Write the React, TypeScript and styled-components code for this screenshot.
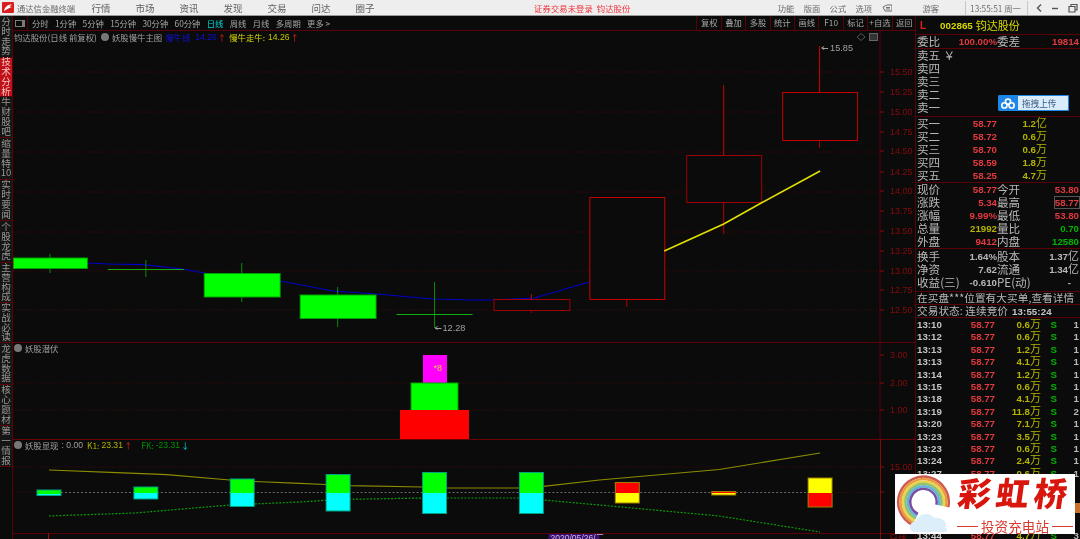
import React from "react";
import styled, { createGlobalStyle } from "styled-components";

const CJK = `"Noto Sans CJK SC", "Noto Sans", sans-serif`;
const NUM = `"Liberation Sans", "Noto Sans CJK SC", sans-serif`;

const RED = "#e23a3f";
const OLIVE = "#b4b400";
const GREEN = "#00b400";
const GRAY = "#b8b8b8";
const LINE = "#5a0008";
const AXIS = "#860c0c";
const BG = "#0b0b0b";

const GlobalStyle = createGlobalStyle`
  html, body { margin: 0; padding: 0; background: ${BG}; overflow: hidden; }
  #root { width: 1080px; height: 539px; }
`;

const Page = styled.div`
  position: relative;
  width: 1080px;
  height: 539px;
  display: flex;
  flex-direction: column;
  background: ${BG};
  overflow: hidden;
  font-family: ${CJK};
  filter: blur(0.3px);
`;

/* ---------- title bar ---------- */

const TitleBar = styled.header`
  height: 15px;
  flex: none;
  display: flex;
  align-items: center;
  background: #eeeeee;
  border-bottom: 1px solid #9a9a9a;
  color: #6a6a6a;
  font-size: 8.3px;
  white-space: nowrap;
`;

const Logo = styled.svg`
  width: 12px;
  height: 11px;
  margin: 0 3px 0 2px;
  flex: none;
`;

const AppName = styled.span`
  width: 62px;
`;

const MainMenu = styled.nav`
  display: flex;
  width: 456px;
`;

const MainMenuItem = styled.span`
  width: 44px;
  text-align: center;
  font-size: 9.5px;
  color: #606060;
`;

const LoginNotice = styled.span`
  width: 244px;
  color: #f0303a;
  letter-spacing: 0.1px;
`;

const SmallMenu = styled.span`
  width: 26px;
  font-size: 8.3px;
`;

const GuestName = styled.span`
  margin: 0 26px 0 30px;
`;

const ClockBox = styled.span`
  width: 57px;
  padding-left: 4px;
  height: 14px;
  line-height: 14px;
  border-left: 1px solid #c8c8c8;
  border-right: 1px solid #c8c8c8;
  font-size: 8.3px;
  color: #707070;
`;

const WindowIcons = styled.svg`
  width: 52px;
  height: 14px;
  flex: none;
`;

/* ---------- body ---------- */

const Body = styled.div`
  flex: 1;
  min-height: 0;
  display: flex;
`;

const SideRail = styled.aside`
  width: 12px;
  flex: none;
  display: flex;
  flex-direction: column;
  border-right: 1px solid ${LINE};
`;

const RailTab = styled.div<{ $active?: boolean; $h: number }>`
  height: ${(p) => p.$h}px;
  flex: none;
  box-sizing: border-box;
  display: flex;
  flex-direction: column;
  align-items: center;
  justify-content: center;
  border-bottom: 1px solid ${LINE};
  background: ${(p) => (p.$active ? "#c01018" : "#151515")};
  color: ${(p) => (p.$active ? "#f0c8c8" : "#989898")};
  font-size: 9.6px;
  line-height: 9.8px;
`;

const ChartColumn = styled.main`
  flex: 1;
  min-width: 0;
  display: flex;
  flex-direction: column;
`;

const Toolbar = styled.div`
  height: 14px;
  flex: none;
  display: flex;
  align-items: center;
  border-bottom: 1px solid ${LINE};
  color: #a6a6a6;
  font-size: 8.3px;
  white-space: nowrap;
`;

const PanelToggle = styled.span`
  width: 15px;
  height: 14px;
  flex: none;
  box-sizing: border-box;
  display: flex;
  align-items: center;
  justify-content: center;
  border-right: 1px solid ${LINE};
  &::before {
    content: "";
    width: 6px;
    height: 5px;
    border: 1px solid #7a7a7a;
    border-right-width: 3px;
  }
`;

const PeriodList = styled.div`
  flex: 1;
  display: flex;
  gap: 6.4px;
  padding-left: 4px;
`;

const Period = styled.span<{ $active?: boolean }>`
  color: ${(p) => (p.$active ? "#00d8d8" : "#a6a6a6")};
`;

const ToolButton = styled.span`
  width: 24.4px;
  height: 14px;
  line-height: 13px;
  flex: none;
  text-align: center;
  border-left: 1px solid ${LINE};
  box-sizing: border-box;
`;

const Pane = styled.section<{ $h: number }>`
  position: relative;
  height: ${(p) => p.$h}px;
  flex: none;
`;

const PaneSvg = styled.svg`
  display: block;
  width: 100%;
  height: 100%;
`;

const Legend = styled.div`
  position: absolute;
  left: 1px;
  top: 0;
  height: 12px;
  display: flex;
  align-items: center;
  font-size: 8.4px;
  color: #a0a0a0;
  white-space: nowrap;
`;

const LegendDot = styled.span<{ $gap?: number }>`
  width: 8px;
  height: 8px;
  border-radius: 50%;
  background: #777;
  margin: 0 3px 0 ${(p) => p.$gap || 0}px;
  flex: none;
`;

const LegendText = styled.span<{ $color?: string; $gap?: number }>`
  color: ${(p) => p.$color || "#a0a0a0"};
  margin-left: ${(p) => p.$gap || 0}px;
`;

const LegendNum = styled(LegendText)`
  font-family: ${NUM};
  font-size: 8.6px;
`;

const AxisText = styled.text`
  font-family: ${NUM};
  font-size: 9px;
  fill: ${AXIS};
`;

const PriceTag = styled.text`
  font-family: ${NUM};
  font-size: 9.2px;
  fill: #a0a0a0;
`;

const DateText = styled.text`
  font-family: ${NUM};
  font-size: 8.6px;
  fill: #c8b8e0;
`;

/* ---------- quote panel ---------- */

const QuotePanel = styled.aside`
  width: 164px;
  flex: none;
  border-left: 1px solid ${LINE};
  margin-left: -1px;
  color: ${GRAY};
  font-size: 11.6px;
  overflow: hidden;
`;

const StockHeader = styled.div`
  height: 19px;
  box-sizing: border-box;
  display: flex;
  align-items: center;
  padding-left: 4px;
  border-bottom: 1px solid ${LINE};
  color: #d8d800;
  font-size: 11px;
`;

const MarketFlag = styled.span`
  color: #e02020;
  font-family: ${NUM};
  font-size: 10px;
  font-weight: 700;
  margin-right: 14px;
`;

const StockCode = styled.span`
  font-family: ${NUM};
  font-weight: 700;
  font-size: 9.8px;
  margin-right: 3px;
`;

const Section = styled.div<{ $top?: number; $bottom?: number }>`
  padding: ${(p) => p.$top || 0}px 0 ${(p) => p.$bottom || 0}px 1px;
  border-bottom: 1px solid ${LINE};
`;

const Row = styled.div<{ $cols: string; $h?: number }>`
  display: grid;
  grid-template-columns: ${(p) => p.$cols};
  height: ${(p) => p.$h || 13}px;
  line-height: ${(p) => p.$h || 13}px;
  white-space: nowrap;
`;

const Value = styled.span<{ $color?: string; $boxed?: boolean }>`
  justify-self: end;
  font-family: ${NUM};
  font-weight: 700;
  font-size: 9.7px;
  color: ${(p) => p.$color || GRAY};
  ${(p) =>
    p.$boxed
      ? `outline: 1px solid #555; outline-offset: 0; height: 11px; line-height: 11px; margin-top: 1px;`
      : ""}
`;

const Unit = styled.span`
  font-family: ${CJK};
  font-weight: 400;
  font-size: 11px;
  line-height: 0;
`;

const TickTime = styled.span`
  font-family: ${NUM};
  font-weight: 700;
  font-size: 9.7px;
  color: #c4c4c4;
`;

const NoteRow = styled.div`
  height: 12px;
  line-height: 12px;
  font-size: 10.6px;
  white-space: nowrap;
  letter-spacing: 0.1px;
`;

const NoteTime = styled.span`
  font-family: ${NUM};
  font-weight: 700;
  font-size: 9.7px;
  margin-left: 4px;
  color: #c4c4c4;
`;

const TickList = styled.div`
  padding: 1px 0 0 1px;
`;

/* ---------- overlays ---------- */

const UploadBadge = styled.div`
  position: absolute;
  left: 998px;
  top: 95px;
  width: 71px;
  height: 16px;
  display: flex;
  align-items: center;
  border-radius: 2px;
  background: linear-gradient(90deg, #1e86e8 0 20px, #d8ecfb 20px);
  box-shadow: inset 0 0 0 1px #1e86e8;
  color: #3a5a80;
  font-size: 8.6px;
`;

const UploadIcon = styled.svg`
  width: 14px;
  height: 11px;
  margin: 0 7px 0 3px;
  flex: none;
`;

const Watermark = styled.div`
  position: absolute;
  left: 895px;
  top: 474px;
  width: 180px;
  height: 60px;
  display: flex;
  background: #fff;
  &::after {
    content: "";
    position: absolute;
    right: -5px;
    top: 29px;
    width: 5px;
    height: 10px;
    background: #c8702a;
  }
`;

const RainbowSvg = styled.svg`
  width: 60px;
  height: 60px;
  flex: none;
`;

const BrandBlock = styled.div`
  flex: 1;
  display: flex;
  flex-direction: column;
  align-items: center;
`;

const BrandName = styled.div`
  height: 44px;
  line-height: 36px;
  font-size: 33px;
  font-weight: 900;
  letter-spacing: 5px;
  color: #d8160e;
  transform: skewX(-8deg);
  white-space: nowrap;
`;

const BrandSlogan = styled.div`
  display: flex;
  align-items: center;
  gap: 3px;
  font-size: 13.6px;
  line-height: 16px;
  color: #d83a30;
  white-space: nowrap;
  &::before,
  &::after {
    content: "";
    width: 21px;
    height: 1px;
    background: #d83a30;
  }
`;

/* ---------- data ---------- */

const railTabs: { label: string[]; h: number; active?: boolean }[] = [
  { label: ["分", "时", "走", "势"], h: 42 },
  { label: ["技", "术", "分", "析"], h: 39, active: true },
  { label: ["牛", "财", "股", "吧"], h: 41 },
  { label: ["缩", "量", "特", "10"], h: 42 },
  { label: ["实", "时", "要", "闻"], h: 41 },
  { label: ["个", "股", "龙", "虎"], h: 42 },
  { label: ["主", "营", "构", "成"], h: 40 },
  { label: ["实", "战", "必", "读"], h: 40 },
  { label: ["龙", "虎", "数", "据"], h: 42 },
  { label: ["核", "心", "题", "材"], h: 41 },
  { label: ["第", "一", "情", "报"], h: 41 },
];

const periods = ["分时", "1分钟", "5分钟", "15分钟", "30分钟", "60分钟", "日线", "周线", "月线", "多周期", "更多 >"];
const toolButtons = ["复权", "叠加", "多股", "统计", "画线", "F10", "标记", "+自选", "返回"];

type CandleData = { x: number; w: number; top: number; bottom: number; high: number; low: number; up?: boolean; bright?: boolean };

const candles: CandleData[] = [
  { x: 13, w: 74, top: 258, bottom: 268.5, high: 254, low: 273 },
  { x: 108, w: 76, top: 269.5, bottom: 269.5, high: 260, low: 277 },
  { x: 204, w: 76, top: 273.5, bottom: 297, high: 263, low: 302 },
  { x: 300, w: 76, top: 295, bottom: 318.5, high: 287, low: 327 },
  { x: 397, w: 76, top: 314.5, bottom: 314.5, high: 282, low: 328 },
  { x: 494, w: 76, top: 299.5, bottom: 310.5, high: 294, low: 313, up: true },
  { x: 590, w: 75, top: 197.5, bottom: 299.5, high: 197.5, low: 307, up: true, bright: true },
  { x: 687, w: 75, top: 155.5, bottom: 202.5, high: 85, low: 234, up: true },
  { x: 783, w: 75, top: 92.5, bottom: 140.5, high: 46, low: 148, up: true, bright: true },
];

const priceTicks: [string, number][] = [
  ["15.50", 72], ["15.25", 92], ["15.00", 112], ["14.75", 132], ["14.50", 151], ["14.25", 172], ["14.00", 191],
  ["13.75", 211], ["13.50", 231], ["13.25", 251], ["13.00", 271], ["12.75", 290], ["12.50", 310],
];
const mainGrid = [72, 112, 152, 192, 232, 271, 310];

type BarData = { x: number; top: number; mid: number; bottom: number; upper: string; lower: string; edge: string };
const signalBars: BarData[] = [
  { x: 37, top: 490, mid: 494, bottom: 495.5, upper: "#00ff00", lower: "#00ffff", edge: "#00a080" },
  { x: 134, top: 487, mid: 493, bottom: 499, upper: "#00ff00", lower: "#00ffff", edge: "#00a080" },
  { x: 230.5, top: 479, mid: 493, bottom: 506.5, upper: "#00ff00", lower: "#00ffff", edge: "#00a080" },
  { x: 326.5, top: 474.5, mid: 493, bottom: 511, upper: "#00ff00", lower: "#00ffff", edge: "#00a080" },
  { x: 423, top: 472.5, mid: 493, bottom: 513.5, upper: "#00ff00", lower: "#00ffff", edge: "#00a080" },
  { x: 520, top: 472.5, mid: 493, bottom: 513.5, upper: "#00ff00", lower: "#00ffff", edge: "#00a080" },
  { x: 616, top: 482.5, mid: 493, bottom: 503, upper: "#ff0000", lower: "#ffff00", edge: "#a08000" },
  { x: 712.5, top: 491.5, mid: 493, bottom: 495, upper: "#ff0000", lower: "#ffff00", edge: "#a08000" },
  { x: 809, top: 478, mid: 493, bottom: 507, upper: "#ffff00", lower: "#ff0000", edge: "#a08000" },
];

const ticks: [string, string, number][] = [
  ["13:10", "0.6", 1], ["13:12", "0.6", 1], ["13:13", "1.2", 1], ["13:13", "4.1", 1], ["13:14", "1.2", 1], ["13:15", "0.6", 1],
  ["13:18", "4.1", 1], ["13:19", "11.8", 2], ["13:20", "7.1", 1], ["13:23", "3.5", 1], ["13:23", "0.6", 1], ["13:24", "2.4", 1],
  ["13:27", "0.6", 1], ["", "", 0], ["", "", 0], ["", "", 0], ["", "", 0], ["13:44", "4.7", 3],
];

const buyRows: [string, string, string, string][] = [
  ["买一", "58.77", "1.2", "亿"],
  ["买二", "58.72", "0.6", "万"],
  ["买三", "58.70", "0.6", "万"],
  ["买四", "58.59", "1.8", "万"],
  ["买五", "58.25", "4.7", "万"],
];

const statCols = "24px 56px 25px 57px";
const stats: [string, string, string, string, string, string, boolean?][] = [
  ["现价", "58.77", RED, "今开", "53.80", RED],
  ["涨跌", "5.34", RED, "最高", "58.77", RED, true],
  ["涨幅", "9.99%", RED, "最低", "53.80", RED],
  ["总量", "21992", OLIVE, "量比", "0.70", GREEN],
  ["外盘", "9412", RED, "内盘", "12580", GREEN],
];

/* ---------- drawing helpers ---------- */

const Candle: React.FC<{ c: CandleData }> = ({ c }) => {
  const mid = c.x + c.w / 2;
  const red = c.bright ? "#c80000" : "#a00000";
  if (c.up) {
    return (
      <g shapeRendering="crispEdges">
        <line x1={mid} x2={mid} y1={c.high} y2={c.top} stroke="#d00000" />
        <line x1={mid} x2={mid} y1={c.bottom} y2={c.low} stroke="#b80000" />
        <rect x={c.x + 0.5} y={c.top} width={c.w} height={c.bottom - c.top} fill={BG} stroke={red} />
      </g>
    );
  }
  return (
    <g shapeRendering="crispEdges">
      <line x1={mid} x2={mid} y1={c.high} y2={c.low} stroke="#0a8a0a" />
      {c.top === c.bottom ? (
        <line x1={c.x} x2={c.x + c.w} y1={c.top} y2={c.top} stroke="#10b010" />
      ) : (
        <rect x={c.x + 0.5} y={c.top} width={c.w} height={c.bottom - c.top} fill="#00ff00" stroke="#00a000" />
      )}
    </g>
  );
};

const GridLine: React.FC<{ y: number; x2?: number }> = ({ y, x2 = 881 }) => (
  <line x1={13} x2={x2} y1={y} y2={y} stroke="#4a0a0a" strokeDasharray="1 2" shapeRendering="crispEdges" />
);

const AxisTick: React.FC<{ y: number; label: string }> = ({ y, label }) => (
  <g>
    <line x1={881} x2={885} y1={y} y2={y} stroke={AXIS} shapeRendering="crispEdges" />
    <AxisText x={891} y={y + 3}>{label}</AxisText>
  </g>
);

const toPoints = (pts: number[][]) => pts.map((p) => p.join(",")).join(" ");

const polar = (cx: number, cy: number, r: number, deg: number) => {
  const a = (deg * Math.PI) / 180;
  return `${(cx + r * Math.cos(a)).toFixed(1)} ${(cy + r * Math.sin(a)).toFixed(1)}`;
};

const rainbowBands: [string, number][] = [
  ["#cf5a52", 25.3],
  ["#e79a3f", 22.9],
  ["#ecd24e", 20.5],
  ["#8fc26b", 18.1],
  ["#5fb4d8", 15.7],
  ["#7a4fa3", 13.2],
];

const blueLine = [[87, 263], [110, 264], [143, 264.6], [183, 269], [204, 273], [281, 281], [333, 291], [377, 294], [433, 299], [473, 300], [494, 300], [535, 298], [590, 282]];
const yellowLine = [[665, 251], [724.5, 224], [762, 203], [821, 171]];
const signalYellow = [[49, 470], [117, 472.6], [167, 474.7], [230, 480], [255, 481.5], [300, 483.3], [326, 484.5], [350, 485.6], [423, 487], [447, 488], [520, 488], [544, 486.3], [600, 480], [720, 469.5], [821, 453]];
const signalGreen = [[49, 516], [135, 513], [230, 505], [300, 502], [326, 500.3], [350, 499.3], [423, 498], [520, 498], [544, 500], [600, 505], [720, 516], [821, 532]];

export default function App() {
  return (
    <Page>
      <GlobalStyle />
      <TitleBar>
        <Logo viewBox="0 0 12 11">
          <rect width="12" height="11" rx="1" fill="#d81e1e" />
          <path d="M2 9 C3 5 5 3 10 2 L7.5 4.6 L10 5 C7 6 5 7 2 9 Z" fill="#fff" />
        </Logo>
        <AppName>通达信金融终端</AppName>
        <MainMenu>
          {["行情", "市场", "资讯", "发现", "交易", "问达", "圈子"].map((m) => (
            <MainMenuItem key={m}>{m}</MainMenuItem>
          ))}
        </MainMenu>
        <LoginNotice>证券交易未登录&nbsp;&nbsp;钧达股份</LoginNotice>
        {["功能", "版面", "公式", "选项"].map((m) => (
          <SmallMenu key={m}>{m}</SmallMenu>
        ))}
        <svg width="11" height="8" viewBox="0 0 11 8">
          <path d="M1 3 L5 1 H10 V7 H3 L1 3 Z M4 3.5 H8 M4 5 H8" fill="none" stroke="#707070" />
        </svg>
        <GuestName>游客</GuestName>
        <ClockBox>13:55:51 周一</ClockBox>
        <WindowIcons viewBox="0 0 52 14">
          <path d="M13 3.5 L9.5 7 L13 10.5" fill="none" stroke="#555" strokeWidth="1.4" />
          <path d="M24 7.5 H30" stroke="#555" strokeWidth="1.4" />
          <path d="M41 5.5 H47 V11 H41 Z M43 5.5 V3.5 H49 V9 H47" fill="none" stroke="#555" strokeWidth="1.2" />
        </WindowIcons>
      </TitleBar>

      <Body>
        <SideRail>
          {railTabs.map((t) => (
            <RailTab key={t.label.join("")} $h={t.h} $active={t.active}>
              {t.label.map((ch) => (
                <span key={ch}>{ch}</span>
              ))}
            </RailTab>
          ))}
        </SideRail>

        <ChartColumn>
          <Toolbar>
            <PanelToggle />
            <PeriodList>
              {periods.map((p) => (
                <Period key={p} $active={p === "日线"}>{p}</Period>
              ))}
            </PeriodList>
            {toolButtons.map((b) => (
              <ToolButton key={b}>{b}</ToolButton>
            ))}
          </Toolbar>

          <Pane $h={311}>
            <PaneSvg viewBox="13 31 904 311" preserveAspectRatio="none">
              {mainGrid.map((y) => (
                <GridLine key={y} y={y} />
              ))}
              <polyline points={toPoints(blueLine)} fill="none" stroke="#0000c8" strokeWidth="1.2" />
              {candles.map((c) => (
                <Candle key={c.x} c={c} />
              ))}
              <polyline points={toPoints(yellowLine)} fill="none" stroke="#e0e000" strokeWidth="1.6" />
              <PriceTag x={831} y={51}>15.85</PriceTag>
              <path d="M829 48.5 H823 M825 46.5 L822.5 48 L825 49.5" fill="none" stroke="#a0a0a0" />
              <PriceTag x={443} y={331}>12.28</PriceTag>
              <path d="M442 328.5 H436 M438 326.5 L435.5 328 L438 329.5" fill="none" stroke="#a0a0a0" />
              <path d="M862 33.5 L866 37 L862 40.5 L858 37 Z" fill="none" stroke="#555" />
              <rect x={870.5} y={33.5} width={8} height={7} fill="#333" stroke="#666" />
              <line x1={881} x2={881} y1={31} y2={342} stroke={LINE} shapeRendering="crispEdges" />
              {priceTicks.map(([label, y]) => (
                <AxisTick key={label} y={y} label={label} />
              ))}
            </PaneSvg>
            <Legend>
              <span>钧达股份(日线 前复权)</span>
              <LegendDot $gap={4} />
              <span>妖股慢牛主图</span>
              <LegendText $color="#1010d8" $gap={3}>慢牛线</LegendText>
              <LegendNum $color="#1010d8" $gap={5}>14.26</LegendNum>
              <LegendText $color="#e02020" $gap={1}>↑</LegendText>
              <LegendText $color="#d8d800" $gap={3}>慢牛走牛:</LegendText>
              <LegendNum $color="#c8c800" $gap={3}>14.26</LegendNum>
              <LegendText $color="#e02020" $gap={1}>↑</LegendText>
            </Legend>
          </Pane>

          <Pane $h={97}>
            <PaneSvg viewBox="13 342 904 97" preserveAspectRatio="none">
              <line x1={13} x2={917} y1={342.5} y2={342.5} stroke={LINE} />
              <GridLine y={383} />
              <GridLine y={410} />
              <g shapeRendering="crispEdges">
                <rect x={423.5} y={355} width={24} height={28} fill="#ff00ff" />
                <rect x={411.5} y={383} width={47} height={28} fill="#00ff00" stroke="#00a000" />
                <rect x={400} y={410} width={70} height={28.5} fill="#ff0000" />
              </g>
              <text x={434} y={371} fontFamily={NUM} fontSize="9" fill="#f0d040">*8</text>
              <line x1={881} x2={881} y1={342} y2={439} stroke={LINE} shapeRendering="crispEdges" />
              <AxisTick y={355} label="3.00" />
              <AxisTick y={383} label="2.00" />
              <AxisTick y={410} label="1.00" />
            </PaneSvg>
            <Legend>
              <LegendDot />
              <span>妖股潜伏</span>
            </Legend>
          </Pane>

          <Pane $h={94}>
            <PaneSvg viewBox="13 439 904 94" preserveAspectRatio="none">
              <line x1={13} x2={917} y1={439.5} y2={439.5} stroke="#680008" />
              <GridLine y={467} />
              <GridLine y={492} x2={61} />
              <line x1={61} x2={809} y1={492.5} y2={492.5} stroke="#6a6a6a" strokeDasharray="2 2" shapeRendering="crispEdges" />
              <polyline points={toPoints(signalYellow)} fill="none" stroke="#8c8c00" strokeWidth="1.2" />
              <polyline points={toPoints(signalGreen)} fill="none" stroke="#0a9a0a" strokeWidth="1.2" strokeDasharray="2 1.5" />
              <g shapeRendering="crispEdges">
                {signalBars.map((b) => (
                  <g key={b.x}>
                    <rect x={b.x} y={b.top} width={24} height={b.mid - b.top} fill={b.upper} />
                    <rect x={b.x} y={b.mid} width={24} height={b.bottom - b.mid} fill={b.lower} />
                    <rect x={b.x} y={b.top} width={24} height={b.bottom - b.top} fill="none" stroke={b.edge} />
                  </g>
                ))}
              </g>
              <line x1={833} x2={881} y1={492.5} y2={492.5} stroke="#4a0a0a" strokeDasharray="1 2" />
              <line x1={881.5} x2={881.5} y1={439} y2={533} stroke={AXIS} shapeRendering="crispEdges" />
              <AxisTick y={467} label="15.00" />
              <line x1={881} x2={885} y1={492} y2={492} stroke={AXIS} shapeRendering="crispEdges" />
            </PaneSvg>
            <Legend>
              <LegendDot />
              <span>妖股显现</span>
              <LegendNum $gap={3}>: 0.00</LegendNum>
              <LegendText $color={OLIVE} $gap={4}>K1:</LegendText>
              <LegendNum $color={OLIVE} $gap={2}>23.31</LegendNum>
              <LegendText $color="#e02020" $gap={1}>↑</LegendText>
              <LegendText $color="#009000" $gap={9}>FK:</LegendText>
              <LegendNum $color="#009000" $gap={2}>-23.31</LegendNum>
              <LegendText $color="#00d8d8" $gap={1}>↓</LegendText>
            </Legend>
          </Pane>

          <Pane $h={6}>
            <PaneSvg viewBox="13 533 904 6" preserveAspectRatio="none">
              <line x1={13} x2={917} y1={533.5} y2={533.5} stroke={LINE} />
              <line x1={48.5} x2={48.5} y1={533} y2={539} stroke="#a01010" />
              <rect x={549} y={534} width={51} height={6} fill="#3a1070" />
              <DateText x={551} y={541}>2020/05/26/二</DateText>
              <line x1={881.5} x2={881.5} y1={533} y2={539} stroke={AXIS} />
              <AxisText x={890} y={542}>日线</AxisText>
            </PaneSvg>
          </Pane>
        </ChartColumn>

        <QuotePanel>
          <StockHeader>
            <MarketFlag>L</MarketFlag>
            <StockCode>002865</StockCode>
            钧达股份
          </StockHeader>
          <Section>
            <Row $cols={statCols}>
              <span>委比</span>
              <Value $color={RED}>100.00%</Value>
              <span>委差</span>
              <Value $color={RED}>19814</Value>
            </Row>
          </Section>
          <Section $bottom={2}>
            {["卖五", "卖四", "卖三", "卖二", "卖一"].map((s, i) => (
              <Row key={s} $cols={statCols}>
                <span>{s}</span>
                {i === 0 && <span>&nbsp;￥</span>}
              </Row>
            ))}
          </Section>
          <Section>
            {buyRows.map(([label, price, vol, unit]) => (
              <Row key={label} $cols="24px 56px 50px">
                <span>{label}</span>
                <Value $color={RED}>{price}</Value>
                <Value $color={OLIVE}>
                  {vol}
                  <Unit>{unit}</Unit>
                </Value>
              </Row>
            ))}
          </Section>
          <Section>
            {stats.map(([l1, v1, c1, l2, v2, c2, boxed]) => (
              <Row key={l1} $cols={statCols}>
                <span>{l1}</span>
                <Value $color={c1}>{v1}</Value>
                <span>{l2}</span>
                <Value $color={c2} $boxed={boxed}>{v2}</Value>
              </Row>
            ))}
          </Section>
          <Section $top={1} $bottom={2}>
            <Row $cols={statCols}>
              <span>换手</span>
              <Value>1.64%</Value>
              <span>股本</span>
              <Value>1.37<Unit>亿</Unit></Value>
            </Row>
            <Row $cols={statCols}>
              <span>净资</span>
              <Value>7.62</Value>
              <span>流通</span>
              <Value>1.34<Unit>亿</Unit></Value>
            </Row>
            <Row $cols={statCols}>
              <span>收益(三)</span>
              <Value>-0.610</Value>
              <span>PE(动)</span>
              <Value>-&nbsp;&nbsp;&nbsp;</Value>
            </Row>
          </Section>
          <Section>
            <NoteRow>在买盘***位置有大买单,查看详情</NoteRow>
          </Section>
          <Section>
            <NoteRow>
              交易状态: 连续竞价<NoteTime>13:55:24</NoteTime>
            </NoteRow>
          </Section>
          <TickList>
            {ticks.map(([time, vol, count], i) =>
              time ? (
                <Row key={i} $cols="24px 54px 46px 16px 22px" $h={12.4}>
                  <TickTime>{time}</TickTime>
                  <Value $color={RED}>58.77</Value>
                  <Value $color={OLIVE}>
                    {vol}
                    <Unit>万</Unit>
                  </Value>
                  <Value $color={GREEN}>S</Value>
                  <Value>{count}</Value>
                </Row>
              ) : (
                <Row key={i} $cols="1fr" $h={12.4} />
              )
            )}
          </TickList>
        </QuotePanel>
      </Body>

      <UploadBadge>
        <UploadIcon viewBox="0 0 14 11">
          <g fill="none" stroke="#fff" strokeWidth="1.6">
            <circle cx="7" cy="3.6" r="2.6" />
            <circle cx="3.4" cy="7.4" r="2.6" />
            <circle cx="10.6" cy="7.4" r="2.6" />
          </g>
        </UploadIcon>
        拖拽上传
      </UploadBadge>

      <Watermark>
        <RainbowSvg viewBox="0 0 60 60">
          {rainbowBands.map(([color, r]) => (
            <path
              key={color}
              d={`M ${polar(28.5, 28, r, 115)} A ${r} ${r} 0 1 1 ${polar(28.5, 28, r, 12)}`}
              fill="none"
              stroke={color}
              strokeWidth="2.5"
            />
          ))}
          <path
            d="M20 58 C13 58 13 48 21 47 C23 40 34 37 39 44 C46 42 54 49 50 53 C54 56 52 58 48 58 Z"
            fill="#dceefa"
          />
        </RainbowSvg>
        <BrandBlock>
          <BrandName>彩虹桥</BrandName>
          <BrandSlogan>投资充电站</BrandSlogan>
        </BrandBlock>
      </Watermark>
    </Page>
  );
}
